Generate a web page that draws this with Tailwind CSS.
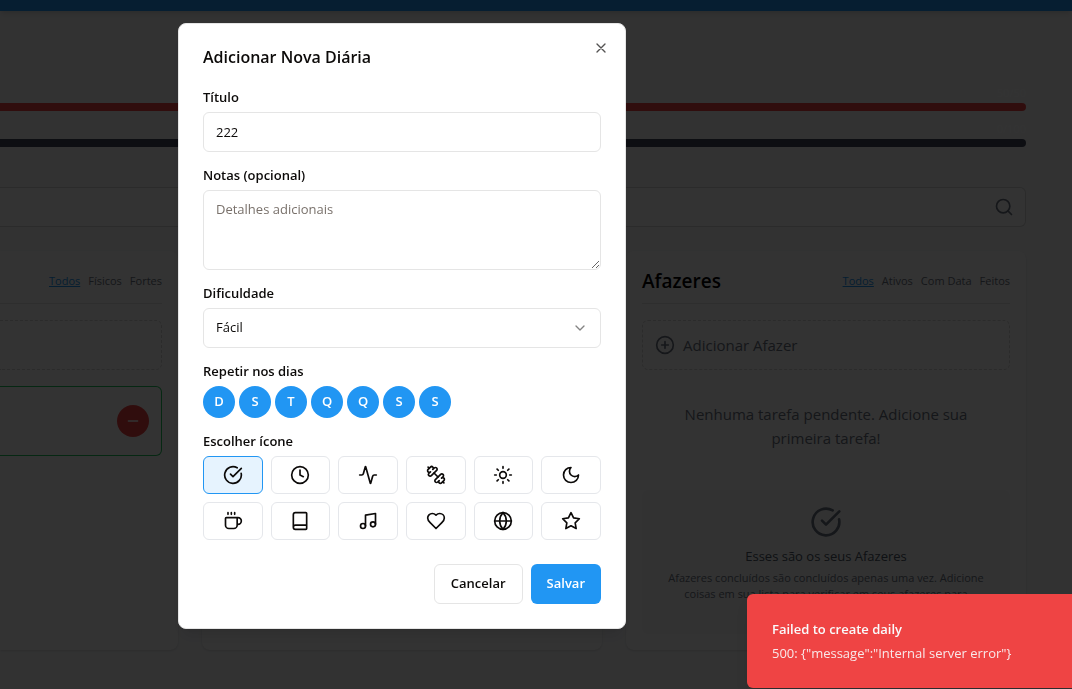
<!DOCTYPE html>
<html lang="pt-BR">
<head>
<meta charset="utf-8">
<meta name="viewport" content="width=device-width, initial-scale=1">
<title>Adicionar Nova Diária</title>
<script src="https://cdn.jsdelivr.net/npm/@tailwindcss/browser@4"></script>
</head>
<body class="h-screen overflow-hidden bg-gray-50 font-['Open_Sans','Noto_Sans',sans-serif] text-[15px] text-stone-950">

<div aria-hidden="true">
  <header class="h-[11px] bg-[#2196f3] shadow-md"></header>
  <main class="pr-[46px]">
    <section class="pt-[72px]">
      <div class="flex h-5 items-center justify-end text-[11px] leading-4 text-white">50/50</div>
      <div class="h-2 rounded-r-full bg-[#ef4444]"></div>
      <div class="mt-2 flex h-5 items-center justify-end text-[11px] leading-4 text-white">0/100</div>
      <div class="h-2 rounded-r-full bg-[#404659]"></div>
    </section>

    <div class="mt-10 flex h-10 items-center justify-end rounded-r-md border-y border-r border-[#d6d6d6] bg-white pr-[11px]">
      <svg class="size-5 text-[#6b7280]" viewBox="0 0 24 24" fill="none" stroke="currentColor" stroke-width="2" stroke-linecap="round" stroke-linejoin="round"><circle cx="11" cy="11" r="8"/><path d="m21 21-4.3-4.3"/></svg>
    </div>

    <div class="mt-6 grid grid-cols-[178px_1fr_400px] gap-6">
      <section class="rounded-r-lg bg-white py-4 pr-4 shadow-sm">
        <div class="flex h-[37px] items-center justify-end gap-2 border-b border-[#e5e5e5] pb-2 text-[11px] text-[#6b7280]">
          <a href="#" class="text-[#2196f3] underline">Todos</a><a href="#">Físicos</a><a href="#">Fortes</a>
        </div>
        <div class="mt-4 h-[50px] rounded-r-md border-y border-r border-dashed border-[#d4d4d4]"></div>
        <div class="mt-4 flex h-[70px] items-center justify-end rounded-r-md border-y border-r border-[#22c55e] pr-3">
          <span class="flex size-8 items-center justify-center rounded-full bg-[#ef4444] text-white">
            <svg class="size-4" viewBox="0 0 24 24" fill="none" stroke="currentColor" stroke-width="2" stroke-linecap="round"><path d="M5 12h14"/></svg>
          </span>
        </div>
      </section>

      <section class="rounded-lg bg-white shadow-sm"></section>

      <section class="rounded-lg bg-white p-4 shadow-sm">
        <div class="flex h-[37px] items-center justify-between border-b border-[#e5e5e5] pb-2">
          <h2 class="text-[19px] leading-7 font-semibold text-black">Afazeres</h2>
          <nav class="flex gap-2 text-[11px] text-[#6b7280]">
            <a href="#" class="text-[#2196f3] underline">Todos</a><a href="#">Ativos</a><a href="#">Com Data</a><a href="#">Feitos</a>
          </nav>
        </div>
        <button type="button" class="mt-4 flex h-[50px] w-full items-center gap-2 rounded-md border border-dashed border-[#d4d4d4] px-3 text-[#6b7280]">
          <svg class="size-5" viewBox="0 0 24 24" fill="none" stroke="currentColor" stroke-width="2" stroke-linecap="round"><circle cx="12" cy="12" r="10"/><path d="M8 12h8M12 8v8"/></svg>
          Adicionar Afazer
        </button>
        <p class="mt-8 px-8 text-center leading-6 text-[#6b7280]">Nenhuma tarefa pendente. Adicione sua primeira tarefa!</p>
        <div class="mt-10 flex flex-col items-center rounded-md bg-gray-50 px-4 pt-4 pb-8 text-center">
          <svg class="size-8 text-[#6b7280]" viewBox="0 0 24 24" fill="none" stroke="currentColor" stroke-width="2" stroke-linecap="round" stroke-linejoin="round"><path d="M21.801 10A10 10 0 1 1 17 3.335"/><path d="m9 11 3 3L22 4"/></svg>
          <h3 class="mt-2 text-[13px] leading-5 text-[#4b5563]">Esses são os seus Afazeres</h3>
          <p class="mt-1 text-[11px] leading-4 text-[#6b7280]">Afazeres concluídos são concluídos apenas uma vez. Adicione coisas em sua lista para verificar em seus afazeres para</p>
        </div>
      </section>
    </div>
  </main>
</div>

<div class="fixed inset-0 bg-black/80 pt-[23px] pl-[178px]">
  <form role="dialog" aria-modal="true" aria-labelledby="dialog-title" class="relative w-full max-w-md rounded-lg border border-[#e5e5e5] bg-white p-6 text-[13px] shadow-lg">
    <h1 id="dialog-title" class="text-[16px] leading-[18px] font-semibold">Adicionar Nova Diária</h1>
    <button type="button" aria-label="Fechar" class="absolute top-4 right-4 opacity-70">
      <svg class="size-4" viewBox="0 0 24 24" fill="none" stroke="currentColor" stroke-width="2" stroke-linecap="round"><path d="M18 6 6 18M6 6l12 12"/></svg>
    </button>

    <div class="mt-6 flex flex-col gap-4">
      <div class="flex flex-col gap-2">
        <label for="titulo" class="leading-[14px] font-semibold">Título</label>
        <input id="titulo" type="text" value="222" class="h-10 w-full rounded-md border border-[#e5e5e5] bg-white px-3">
      </div>
      <div class="flex flex-col gap-2">
        <label for="notas" class="leading-[14px] font-semibold">Notas (opcional)</label>
        <textarea id="notas" placeholder="Detalhes adicionais" class="h-20 w-full rounded-md border border-[#e5e5e5] bg-white px-3 py-2 leading-5 placeholder:text-stone-500"></textarea>
      </div>
      <div class="flex flex-col gap-2">
        <label for="dificuldade" class="leading-[14px] font-semibold">Dificuldade</label>
        <div class="relative">
          <select id="dificuldade" class="h-10 w-full appearance-none rounded-md border border-[#e5e5e5] bg-white px-3">
            <option>Fácil</option><option>Médio</option><option>Difícil</option>
          </select>
          <svg class="pointer-events-none absolute top-3 right-[13px] size-4 opacity-50" viewBox="0 0 24 24" fill="none" stroke="currentColor" stroke-width="2" stroke-linecap="round" stroke-linejoin="round"><path d="m6 9 6 6 6-6"/></svg>
        </div>
      </div>
      <fieldset>
        <legend class="mb-2 leading-[14px] font-semibold">Repetir nos dias</legend>
        <div class="flex gap-1 font-semibold text-white">
          <button type="button" aria-pressed="true" class="size-8 rounded-full bg-[#2196f3]">D</button>
          <button type="button" aria-pressed="true" class="size-8 rounded-full bg-[#2196f3]">S</button>
          <button type="button" aria-pressed="true" class="size-8 rounded-full bg-[#2196f3]">T</button>
          <button type="button" aria-pressed="true" class="size-8 rounded-full bg-[#2196f3]">Q</button>
          <button type="button" aria-pressed="true" class="size-8 rounded-full bg-[#2196f3]">Q</button>
          <button type="button" aria-pressed="true" class="size-8 rounded-full bg-[#2196f3]">S</button>
          <button type="button" aria-pressed="true" class="size-8 rounded-full bg-[#2196f3]">S</button>
        </div>
      </fieldset>
      <fieldset>
        <legend class="mb-2 leading-[14px] font-semibold">Escolher ícone</legend>
        <div class="grid grid-cols-6 gap-2">
          <button type="button" aria-label="Concluído" aria-pressed="true" class="flex h-[38px] items-center justify-center rounded-md border border-[#2196f3] bg-[#e6f3fe]">
            <svg class="size-5" viewBox="0 0 24 24" fill="none" stroke="currentColor" stroke-width="2" stroke-linecap="round" stroke-linejoin="round"><path d="M21.801 10A10 10 0 1 1 17 3.335"/><path d="m9 11 3 3L22 4"/></svg>
          </button>
          <button type="button" aria-label="Relógio" class="flex h-[38px] items-center justify-center rounded-md border border-[#e5e7eb]">
            <svg class="size-5" viewBox="0 0 24 24" fill="none" stroke="currentColor" stroke-width="2" stroke-linecap="round" stroke-linejoin="round"><circle cx="12" cy="12" r="10"/><path d="M12 6v6l4 2"/></svg>
          </button>
          <button type="button" aria-label="Atividade" class="flex h-[38px] items-center justify-center rounded-md border border-[#e5e7eb]">
            <svg class="size-5" viewBox="0 0 24 24" fill="none" stroke="currentColor" stroke-width="2" stroke-linecap="round" stroke-linejoin="round"><path d="M22 12h-2.48a2 2 0 0 0-1.93 1.46l-2.35 8.36a.25.25 0 0 1-.48 0L9.24 2.18a.25.25 0 0 0-.48 0l-2.35 8.36A2 2 0 0 1 4.49 12H2"/></svg>
          </button>
          <button type="button" aria-label="Haltere" class="flex h-[38px] items-center justify-center rounded-md border border-[#e5e7eb]">
            <svg class="size-5" viewBox="0 0 24 24" fill="none" stroke="currentColor" stroke-width="2" stroke-linecap="round" stroke-linejoin="round"><path d="M14.4 14.4 9.6 9.6"/><path d="M18.657 21.485a2 2 0 1 1-2.829-2.828l-1.767 1.768a2 2 0 1 1-2.829-2.829l6.364-6.364a2 2 0 1 1 2.829 2.829l-1.768 1.767a2 2 0 1 1 2.828 2.829z"/><path d="m21.5 21.5-1.4-1.4"/><path d="M3.9 3.9 2.5 2.5"/><path d="M6.404 12.768a2 2 0 1 1-2.829-2.829l1.768-1.767a2 2 0 1 1-2.828-2.829l2.828-2.828a2 2 0 1 1 2.829 2.828l1.767-1.768a2 2 0 1 1 2.829 2.829z"/></svg>
          </button>
          <button type="button" aria-label="Sol" class="flex h-[38px] items-center justify-center rounded-md border border-[#e5e7eb]">
            <svg class="size-5" viewBox="0 0 24 24" fill="none" stroke="currentColor" stroke-width="2" stroke-linecap="round" stroke-linejoin="round"><circle cx="12" cy="12" r="4"/><path d="M12 2v2M12 20v2M4.93 4.93l1.41 1.41M17.66 17.66l1.41 1.41M2 12h2M20 12h2M6.34 17.66l-1.41 1.41M19.07 4.93l-1.41 1.41"/></svg>
          </button>
          <button type="button" aria-label="Lua" class="flex h-[38px] items-center justify-center rounded-md border border-[#e5e7eb]">
            <svg class="size-5" viewBox="0 0 24 24" fill="none" stroke="currentColor" stroke-width="2" stroke-linecap="round" stroke-linejoin="round"><path d="M12 3a6 6 0 0 0 9 9 9 9 0 1 1-9-9Z"/></svg>
          </button>
          <button type="button" aria-label="Café" class="flex h-[38px] items-center justify-center rounded-md border border-[#e5e7eb]">
            <svg class="size-5" viewBox="0 0 24 24" fill="none" stroke="currentColor" stroke-width="2" stroke-linecap="round" stroke-linejoin="round"><path d="M10 2v2M14 2v2M6 2v2"/><path d="M16 8a1 1 0 0 1 1 1v8a4 4 0 0 1-4 4H7a4 4 0 0 1-4-4V9a1 1 0 0 1 1-1h14a4 4 0 1 1 0 8h-1"/></svg>
          </button>
          <button type="button" aria-label="Livro" class="flex h-[38px] items-center justify-center rounded-md border border-[#e5e7eb]">
            <svg class="size-5" viewBox="0 0 24 24" fill="none" stroke="currentColor" stroke-width="2" stroke-linecap="round" stroke-linejoin="round"><path d="M4 19.5v-15A2.5 2.5 0 0 1 6.5 2H19a1 1 0 0 1 1 1v18a1 1 0 0 1-1 1H6.5a1 1 0 0 1 0-5H20"/></svg>
          </button>
          <button type="button" aria-label="Música" class="flex h-[38px] items-center justify-center rounded-md border border-[#e5e7eb]">
            <svg class="size-5" viewBox="0 0 24 24" fill="none" stroke="currentColor" stroke-width="2" stroke-linecap="round" stroke-linejoin="round"><path d="M9 18V5l12-2v13"/><circle cx="6" cy="18" r="3"/><circle cx="18" cy="16" r="3"/></svg>
          </button>
          <button type="button" aria-label="Coração" class="flex h-[38px] items-center justify-center rounded-md border border-[#e5e7eb]">
            <svg class="size-5" viewBox="0 0 24 24" fill="none" stroke="currentColor" stroke-width="2" stroke-linecap="round" stroke-linejoin="round"><path d="M19 14c1.49-1.46 3-3.21 3-5.5A5.5 5.5 0 0 0 16.5 3c-1.76 0-3 .5-4.5 2-1.5-1.5-2.74-2-4.5-2A5.5 5.5 0 0 0 2 8.5c0 2.3 1.5 4.05 3 5.5l7 7Z"/></svg>
          </button>
          <button type="button" aria-label="Globo" class="flex h-[38px] items-center justify-center rounded-md border border-[#e5e7eb]">
            <svg class="size-5" viewBox="0 0 24 24" fill="none" stroke="currentColor" stroke-width="2" stroke-linecap="round" stroke-linejoin="round"><circle cx="12" cy="12" r="10"/><path d="M12 2a14.5 14.5 0 0 0 0 20 14.5 14.5 0 0 0 0-20"/><path d="M2 12h20"/></svg>
          </button>
          <button type="button" aria-label="Estrela" class="flex h-[38px] items-center justify-center rounded-md border border-[#e5e7eb]">
            <svg class="size-5" viewBox="0 0 24 24" fill="none" stroke="currentColor" stroke-width="2" stroke-linecap="round" stroke-linejoin="round"><path d="m12 2 3.09 6.26L22 9.27l-5 4.87 1.18 6.88L12 17.77l-6.18 3.25L7 14.14 2 9.27l6.91-1.01L12 2z"/></svg>
          </button>
        </div>
      </fieldset>
    </div>

    <div class="mt-6 flex justify-end gap-2 font-semibold">
      <button type="button" class="h-10 rounded-md border border-[#e5e5e5] px-4">Cancelar</button>
      <button type="submit" class="h-10 rounded-md bg-[#2196f3] px-4 text-white">Salvar</button>
    </div>
  </form>
</div>

<div role="alert" class="fixed right-0 bottom-px w-[325px] rounded-l-md bg-[#ef4444] px-[25px] py-[25px] text-[13px] leading-5 text-gray-50 shadow-lg">
  <p class="font-semibold">Failed to create daily</p>
  <p class="mt-1 opacity-90">500: {"message":"Internal server error"}</p>
</div>

</body>
</html>
